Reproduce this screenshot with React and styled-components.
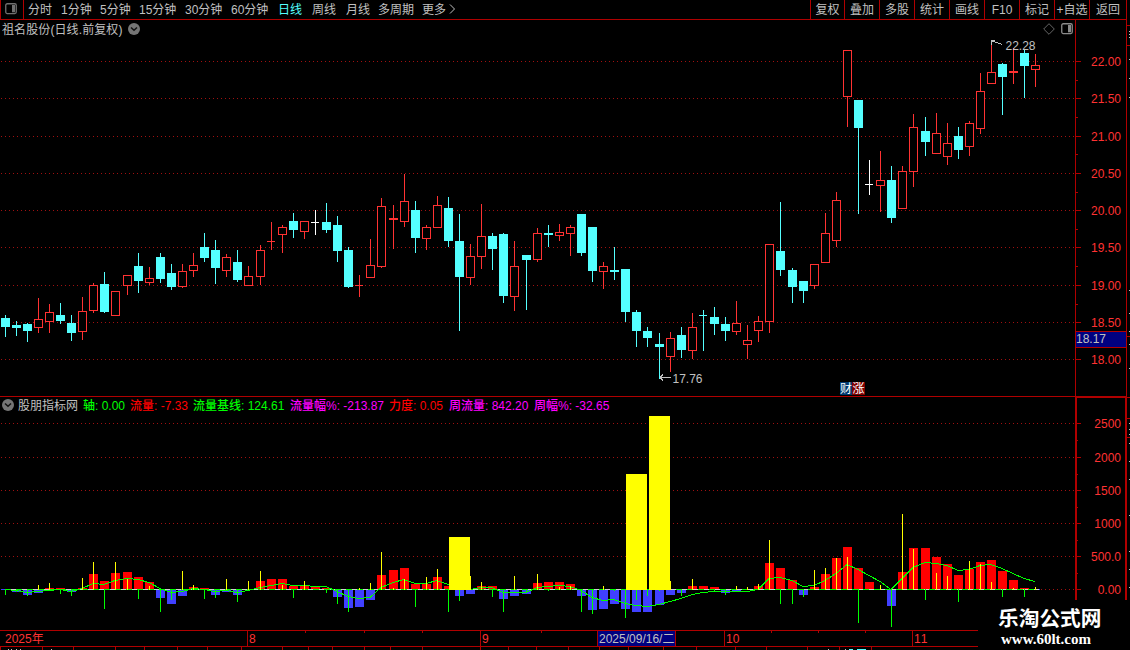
import React from "react";
import styled, { createGlobalStyle } from "styled-components";

const LINE = "#b00000";
const UP = "#ff3232";
const DOWN = "#54ffff";
const GREY = "#c0c0c0";

const GlobalStyle = createGlobalStyle`
  body {
    margin: 0;
    background: #000;
    overflow: hidden;
    font-family: "Liberation Sans", "Noto Sans CJK SC", sans-serif;
    font-size: 12px;
    font-kerning: none;
  }
  svg {
    display: block;
    flex-shrink: 0;
  }
`;

const Screen = styled.div`
  position: relative;
  display: flex;
  flex-direction: column;
  width: 1130px;
  height: 650px;
  background: #000;
  color: ${GREY};
  overflow: hidden;
`;

const Toolbar = styled.div`
  display: flex;
  box-sizing: border-box;
  width: 1127px;
  height: 20px;
  border-bottom: 1px solid ${LINE};
  border-right: 1px solid ${LINE};
`;

const ToggleBox = styled.div`
  display: flex;
  box-sizing: border-box;
  width: 24px;
  padding: 3px 0 0 4px;
  border-left: 1px solid ${LINE};
  border-right: 1px solid ${LINE};
`;

const Periods = styled.div`
  display: flex;
  flex: 1;
  padding-left: 4px;
`;

const Period = styled.div`
  width: ${(props) => props.$width}px;
  line-height: 20px;
  white-space: nowrap;
  color: ${(props) => (props.$active ? DOWN : GREY)};
`;

const Tool = styled.div`
  box-sizing: border-box;
  width: ${(props) => props.$width || 35}px;
  height: 19px;
  border-left: 1px solid ${LINE};
  line-height: 20px;
  text-align: center;
  white-space: nowrap;
`;

const Panel = styled.div`
  display: flex;
  height: ${(props) => props.$height}px;
`;

const Main = styled.div`
  display: flex;
  flex-direction: column;
  width: 1075px;
`;

const TitleRow = styled.div`
  display: flex;
  align-items: center;
  justify-content: space-between;
  height: 18px;
  padding: 0 2px;
`;

const Title = styled.div`
  display: flex;
  align-items: center;
  gap: 4px;
  white-space: nowrap;
`;

const StockName = styled.span`
  width: 122px;
  padding-top: 2px;
  line-height: 18px;
  letter-spacing: 0.1px;
`;

const TitleIcons = styled.div`
  display: flex;
  gap: 6px;
`;

const Legend = styled.div`
  display: flex;
  box-sizing: border-box;
  height: 19px;
  padding: 0 0 0 2px;
  border-top: 1px solid ${LINE};
  line-height: 18px;
  white-space: nowrap;
`;

const LegendName = styled.span`
  width: 65px;
  margin-left: 4px;
`;

const LegendItem = styled.span`
  width: ${(props) => props.$width}px;
  color: ${(props) => props.$color};
  font-weight: 500;
`;

const LegendIcon = styled.span`
  padding-top: 2px;
`;

const DateRow = styled.div`
  position: relative;
  display: flex;
  box-sizing: border-box;
  width: 978px;
  height: 17px;
  border-top: 1px solid ${LINE};
  border-bottom: 1px solid ${LINE};
`;

const DateCell = styled.div`
  box-sizing: border-box;
  width: ${(props) => props.$width}px;
  padding-left: ${(props) => props.$pad || 1}px;
  border-left: ${(props) => (props.$open ? "none" : `1px solid ${LINE}`)};
  background: ${(props) => (props.$active ? "#000080" : "none")};
  color: ${(props) => (props.$active ? GREY : UP)};
  line-height: 16px;
  white-space: nowrap;
`;

const Tick = styled.i`
  position: absolute;
  top: 0;
  left: ${(props) => props.$left}px;
  width: 1px;
  height: 2px;
  background: ${LINE};
`;

const Brand = styled.div`
  position: absolute;
  right: 0;
  bottom: 0;
  display: flex;
  flex-direction: column;
  box-sizing: border-box;
  width: 152px;
  height: 50px;
  padding-left: 20px;
  background: #000;
  color: #fff;
  white-space: nowrap;
`;

const BrandName = styled.div`
  margin-top: 3px;
  font: 700 20.7px/29px "Noto Sans CJK SC", sans-serif;
`;

const BrandSite = styled.div`
  padding-left: 3px;
  font: 700 15px/14px "Liberation Serif", serif;
`;

const periods = [
  ["分时", 33],
  ["1分钟", 39],
  ["5分钟", 39],
  ["15分钟", 46],
  ["30分钟", 46],
  ["60分钟", 47],
  ["日线", 34, true],
  ["周线", 34],
  ["月线", 32],
  ["多周期", 44],
  ["更多", 26],
];

const tools = [
  ["复权", 34],
  ["叠加"],
  ["多股"],
  ["统计"],
  ["画线"],
  ["F10"],
  ["标记"],
  ["+自选"],
  ["返回", 37],
];

const legend = [
  ["轴: 0.00", 47, "#00ff00"],
  ["流量: -7.33", 63, "#ff0000"],
  ["流量基线: 124.61", 97, "#00ff00"],
  ["流量幅%: -213.87", 99, "#ff00ff"],
  ["力度: 0.05", 60, "#ff0000"],
  ["周流量: 842.20", 85, "#ff00ff"],
  ["周幅%: -32.65", 80, "#ff00ff"],
];

// x, high, body top, body bottom, low, kind (u up, d down, w flat)
const candles = [
  [5, 315, 318, 327, 337, "d"],
  [16, 321, 325, 328, 336, "d"],
  [27, 323, 324, 331, 342, "d"],
  [38, 298, 319, 328, 333, "u"],
  [49, 304, 312, 322, 333, "u"],
  [60, 303, 315, 321, 324, "d"],
  [71, 315, 323, 333, 341, "d"],
  [82, 297, 311, 332, 340, "u"],
  [93, 283, 285, 311, 313, "u"],
  [104, 272, 284, 312, 313, "d"],
  [115, 291, 291, 316, 316, "u"],
  [127, 275, 275, 286, 295, "u"],
  [138, 253, 266, 281, 293, "d"],
  [149, 267, 278, 283, 285, "u"],
  [160, 253, 257, 279, 283, "d"],
  [171, 264, 273, 287, 290, "d"],
  [182, 264, 271, 287, 288, "u"],
  [193, 253, 265, 271, 277, "u"],
  [204, 233, 247, 258, 262, "d"],
  [215, 240, 250, 268, 284, "d"],
  [226, 254, 257, 271, 277, "u"],
  [237, 250, 262, 280, 282, "d"],
  [248, 266, 276, 286, 286, "u"],
  [260, 245, 250, 277, 285, "u"],
  [271, 222, 241, 242, 250, "u"],
  [282, 225, 227, 235, 253, "u"],
  [293, 213, 221, 230, 238, "d"],
  [304, 221, 221, 232, 239, "u"],
  [315, 210, 222, 223, 235, "w"],
  [326, 203, 222, 230, 233, "d"],
  [337, 216, 225, 251, 262, "d"],
  [348, 247, 250, 287, 288, "d"],
  [359, 275, 285, 286, 297, "u"],
  [370, 239, 265, 278, 278, "u"],
  [381, 198, 206, 267, 268, "u"],
  [393, 205, 218, 220, 249, "u"],
  [404, 174, 201, 222, 227, "u"],
  [415, 201, 210, 238, 253, "d"],
  [426, 225, 227, 239, 250, "u"],
  [437, 196, 205, 228, 228, "u"],
  [448, 197, 208, 241, 247, "d"],
  [459, 214, 241, 277, 331, "d"],
  [470, 244, 256, 278, 285, "u"],
  [481, 204, 236, 257, 269, "u"],
  [492, 233, 236, 249, 270, "d"],
  [503, 233, 234, 296, 303, "d"],
  [514, 241, 266, 297, 311, "u"],
  [526, 255, 255, 260, 310, "d"],
  [537, 228, 233, 260, 262, "u"],
  [548, 225, 233, 235, 247, "d"],
  [559, 224, 232, 236, 241, "u"],
  [570, 225, 227, 234, 256, "u"],
  [581, 214, 214, 253, 256, "d"],
  [592, 227, 227, 271, 282, "d"],
  [603, 262, 266, 272, 289, "u"],
  [614, 247, 270, 272, 280, "d"],
  [625, 269, 269, 312, 322, "d"],
  [636, 310, 312, 331, 347, "d"],
  [647, 327, 331, 338, 347, "d"],
  [659, 333, 344, 347, 379, "d"],
  [670, 332, 338, 357, 372, "u"],
  [681, 327, 335, 350, 358, "d"],
  [692, 313, 327, 351, 359, "u"],
  [703, 310, 315, 316, 351, "d"],
  [714, 307, 317, 324, 335, "d"],
  [725, 317, 324, 331, 341, "d"],
  [736, 301, 323, 332, 335, "u"],
  [747, 325, 340, 345, 359, "u"],
  [758, 316, 321, 331, 342, "u"],
  [769, 244, 244, 322, 333, "u"],
  [780, 202, 251, 270, 276, "d"],
  [792, 268, 270, 287, 303, "d"],
  [803, 281, 281, 291, 303, "d"],
  [814, 264, 264, 286, 289, "u"],
  [825, 213, 233, 263, 263, "u"],
  [836, 192, 200, 241, 247, "u"],
  [847, 50, 50, 97, 127, "u"],
  [858, 100, 100, 128, 214, "d"],
  [869, 160, 184, 185, 195, "w"],
  [880, 151, 180, 186, 212, "u"],
  [891, 166, 180, 218, 223, "d"],
  [902, 166, 171, 209, 209, "u"],
  [913, 114, 127, 172, 187, "u"],
  [925, 117, 131, 142, 156, "d"],
  [936, 113, 133, 154, 154, "u"],
  [947, 123, 143, 157, 165, "u"],
  [958, 127, 136, 150, 159, "d"],
  [969, 121, 123, 147, 156, "u"],
  [980, 73, 91, 129, 134, "u"],
  [991, 40, 72, 84, 84, "u"],
  [1002, 63, 64, 77, 115, "d"],
  [1013, 48, 71, 73, 84, "u"],
  [1024, 49, 53, 66, 98, "d"],
  [1035, 54, 65, 70, 87, "u"],
];

// bar end, spike end (0 for none), base line; one row for each candle
const flow = [
  [590, 595, 589], [592, 592, 590], [595, 596, 592], [593, 585, 591],
  [588, 583, 590], [588, 594, 589], [592, 596, 591], [588, 578, 588],
  [574, 562, 583], [581, 609, 584], [573, 562, 580], [572, 579, 578],
  [577, 599, 579], [582, 586, 582], [598, 612, 588], [604, 600, 592],
  [596, 571, 591], [587, 585, 588], [588, 599, 589], [595, 598, 591],
  [592, 579, 590], [595, 602, 592], [590, 581, 590], [581, 571, 587],
  [579, 0, 585], [579, 585, 583], [586, 598, 585], [586, 581, 585],
  [587, 0, 586], [588, 593, 586], [597, 604, 591], [608, 612, 596],
  [607, 588, 598], [600, 583, 597], [575, 552, 587], [570, 588, 582],
  [568, 579, 579], [584, 607, 583], [584, 577, 583], [577, 569, 580],
  [586, 612, 584], [596, 601, 587], [594, 576, 589], [586, 582, 587],
  [586, 597, 587], [599, 612, 592], [596, 576, 592], [594, 592, 592],
  [583, 574, 587], [582, 591, 586], [582, 587, 585], [584, 586, 586],
  [596, 612, 590], [610, 614, 597], [609, 586, 600], [604, 591, 599],
  [609, 618, 603], [612, 600, 605], [612, 596, 606], [605, 591, 604],
  [595, 581, 601], [593, 596, 598], [586, 579, 594], [586, 0, 592],
  [587, 591, 591], [593, 595, 591], [591, 586, 591], [590, 587, 591],
  [586, 584, 589], [563, 540, 578], [568, 604, 577], [580, 604, 580],
  [595, 597, 586], [587, 570, 585], [574, 568, 580], [558, 558, 573],
  [547, 557, 564], [568, 623, 569], [582, 0, 575], [590, 585, 581],
  [606, 627, 589], [572, 514, 578], [548, 549, 567], [548, 600, 562],
  [557, 573, 563], [564, 576, 565], [575, 602, 570], [569, 561, 569],
  [562, 564, 565], [560, 582, 564], [571, 597, 568], [580, 588, 573],
  [588, 597, 578], [590, 587, 581],
];

const bigBars = [
  [449, 537],
  [626, 474],
  [649, 416],
];

const priceTicks = [
  [61, "22.00"],
  [98, "21.50"],
  [136, "21.00"],
  [173, "20.50"],
  [210, "20.00"],
  [247, "19.50"],
  [285, "19.00"],
  [322, "18.50"],
  [359, "18.00"],
];

const flowTicks = [
  [423, "2500"],
  [457, "2000"],
  [490, "1500"],
  [523, "1000"],
  [556, "500.0"],
  [589, "0.00"],
];

const dateCells = [
  ["2025年", 247, 5],
  ["8", 233],
  ["9", 117],
  ["2025/09/16/二", 78, 1, true],
  ["", 49],
  ["10", 188],
  ["11", 66],
];

const dateTicks = [305, 364, 422, 541, 771, 818, 865];

const footTicks = [
  0, 42, 73, 115, 144, 177, 207, 241, 282, 308, 332, 364, 390, 422, 480, 508,
  536, 568, 599, 628, 663, 696, 735, 766, 807, 839, 871,
];

const edgeMarks = [31, 34, 37, 59, 78, 97, 290, 313, 331, 344, 368, 423, 429, 434, 443, 461, 479, 515, 551, 569, 587];

function PanelIcon({ color = "#8a8a8a" }) {
  return (
    <svg width="12" height="12" viewBox="0 0 12 12">
      <rect x="0.75" y="0.75" width="10.5" height="9.8" rx="1.5" fill="none" stroke={color} strokeWidth="1.3" />
      <rect x="7" y="2" width="3" height="7.3" fill={color} />
    </svg>
  );
}

function ChevronIcon() {
  return (
    <svg width="12" height="12" viewBox="0 0 12 12">
      <circle cx="6" cy="6" r="6" fill="#757575" />
      <path d="M3 4.5L6 7.3L9 4.5" fill="none" stroke="#111" strokeWidth="1.5" />
    </svg>
  );
}

function DiamondIcon() {
  return (
    <svg width="12" height="12" viewBox="0 0 12 12">
      <path d="M6 0.7L11.3 6L6 11.3L0.7 6Z" fill="none" stroke="#808080" strokeWidth="0.8" />
    </svg>
  );
}

function Grid({ ticks }) {
  return ticks.map(([y]) => (
    <line key={y} x1="1" x2="1075" y1={y + 0.5} y2={y + 0.5} stroke="#a01010" strokeDasharray="1 3" />
  ));
}

function Candle({ data }) {
  const [x, high, top, bottom, low, kind] = data;
  const color = { u: UP, d: DOWN, w: "#ffffff" }[kind];
  const height = bottom - top;
  const hollow = kind === "u" && height > 2;
  return (
    <g fill={color}>
      <rect x={x} y={high} width="1" height={low - high} />
      <rect x={x - 4} y={top} width={height === 1 ? 8 : 9} height={height} />
      {hollow && <rect x={x - 3} y={top + 1} width="7" height={height - 2} fill="#000" />}
    </g>
  );
}

function PriceChart() {
  return (
    <svg width="1075" height="358" viewBox="0 38 1075 358" shapeRendering="crispEdges">
      <Grid ticks={priceTicks} />
      {candles.map((c) => (
        <Candle key={c[0]} data={c} />
      ))}
      <path d="M991 40.5H995M991.5 41V45M992 41.5H994L1002 44.5" fill="none" stroke={GREY} />
      <text x="1005.5" y="50" fill={GREY}>22.28</text>
      <path d="M660 377.5H671M660 377.5L663 374.5M660 377.5L663 380.5" fill="none" stroke={GREY} />
      <text x="672.5" y="383" fill={GREY}>17.76</text>
      <rect x="840" y="382" width="12" height="13" fill="#003870" />
      <rect x="852" y="382" width="13" height="13" fill="#800000" />
      <text x="840" y="393" fill="#fff">财</text>
      <text x="852.5" y="393" fill="#fff">涨</text>
    </svg>
  );
}

function FlowChart() {
  const base = flow.map((f, i) => `${candles[i][0]},${f[2] + 0.5}`).join(" ");
  return (
    <svg width="1075" height="215" viewBox="0 415 1075 215" shapeRendering="crispEdges">
      <Grid ticks={flowTicks} />
      {flow.map(([end], i) => (
        <rect
          key={i}
          x={candles[i][0] - 4}
          y={Math.min(end, 589)}
          width="9"
          height={Math.abs(end - 589)}
          fill={end < 589 ? "#ff0000" : "#4040ff"}
        />
      ))}
      <line x1="5" x2="1039" y1="589.5" y2="589.5" stroke="#d0d0d0" />
      <line x1="5" x2="1039" y1="589.5" y2="589.5" stroke="#00ff00" strokeDasharray="6 5" />
      <polyline points={base} fill="none" stroke="#00ff00" />
      {flow.map(([, spike], i) =>
        spike ? (
          <rect
            key={i}
            x={candles[i][0]}
            y={Math.min(spike, 589)}
            width="1"
            height={Math.abs(spike - 589) + (spike < 589 ? 1 : 0)}
            fill={spike < 589 ? "#ffff00" : "#00ff00"}
          />
        ) : null
      )}
      {bigBars.map(([x, y]) => (
        <rect key={x} x={x} y={y} width="21" height={590 - y} fill="#ffff00" />
      ))}
    </svg>
  );
}

function Axis({ ticks, top, height, thick, minors, children }) {
  return (
    <svg width="55" height={height} viewBox={`1075 ${top} 55 ${height}`} shapeRendering="crispEdges">
      <rect x="1075" y={top} width={thick ? 2 : 1} height={height} fill={LINE} />
      <rect x={thick ? 1125 : 1126} y={top} width={thick ? 2 : 1} height={height} fill={LINE} />
      {thick && <rect x="1075" y={top} width="52" height="2" fill={LINE} />}
      {ticks.map(([y, label]) => (
        <g key={y}>
          <rect x="1075" y={y} width="6" height="1" fill={LINE} />
          <text x="1121" y={y + 5} fill={UP} textAnchor="end">{label}</text>
        </g>
      ))}
      {minors.map((y) => (
        <rect key={y} x="1075" y={y} width="3" height="1" fill={LINE} />
      ))}
      {edgeMarks.map((y) => (
        <rect key={y} x="1129" y={y} width="1" height="1" fill={GREY} />
      ))}
      {[25, 45, 336, 397, 418, 437].map((y) => (
        <rect key={y} x="1127" y={y} width="3" height="1" fill={LINE} />
      ))}
      {children}
    </svg>
  );
}

function FootStrip() {
  return (
    <svg width="978" height="3" viewBox="0 647 978 3" shapeRendering="crispEdges">
      {footTicks.map((x) => (
        <rect key={x} x={x} y="647" width="1" height="3" fill={LINE} />
      ))}
      {[8, 11, 16, 20, 51, 828, 845].map((x) => (
        <rect key={x} x={x} y="649" width="1" height="1" fill={GREY} />
      ))}
      <rect x="849" y="649" width="4" height="1" fill={DOWN} />
      <rect x="857" y="649" width="9" height="1" fill={DOWN} />
    </svg>
  );
}

function App() {
  return (
    <Screen>
      <GlobalStyle />
      <Toolbar>
        <ToggleBox>
          <PanelIcon color="#707070" />
        </ToggleBox>
        <Periods>
          {periods.map(([name, width, active]) => (
            <Period key={name} $width={width} $active={active}>
              {name}
            </Period>
          ))}
          <svg width="8" height="18" viewBox="0 0 8 18">
            <path d="M2 4.5L6.5 9L2 13.5" fill="none" stroke={GREY} />
          </svg>
        </Periods>
        {tools.map(([name, width]) => (
          <Tool key={name} $width={width}>
            {name}
          </Tool>
        ))}
      </Toolbar>
      <Panel $height={376}>
        <Main>
          <TitleRow>
            <Title>
              <StockName>祖名股份(日线.前复权)</StockName>
              <ChevronIcon />
            </Title>
            <TitleIcons>
              <DiamondIcon />
              <PanelIcon />
            </TitleIcons>
          </TitleRow>
          <PriceChart />
        </Main>
        <Axis ticks={priceTicks} top={20} height={376} minors={[80, 117, 154, 192, 229, 266, 304]}>
          <rect x="1076" y="331" width="50" height="17" fill="#000080" />
          <rect x="1076" y="331" width="50" height="1" fill={LINE} />
          <rect x="1076" y="347" width="50" height="1" fill={LINE} />
          <text x="1076" y="343" fill={GREY}>18.17</text>
        </Axis>
      </Panel>
      <Panel $height={234}>
        <Main>
          <Legend>
            <LegendIcon>
              <ChevronIcon />
            </LegendIcon>
            <LegendName>股朋指标网</LegendName>
            {legend.map(([text, width, color]) => (
              <LegendItem key={text} $width={width} $color={color}>
                {text}
              </LegendItem>
            ))}
          </Legend>
          <FlowChart />
        </Main>
        <Axis ticks={flowTicks} top={396} height={234} minors={[440, 474, 507, 540, 573]} thick />
      </Panel>
      <DateRow>
        {dateCells.map(([text, width, pad, active], i) => (
          <DateCell key={i} $width={width} $pad={pad} $active={active} $open={i === 0}>
            {text}
          </DateCell>
        ))}
        {dateTicks.map((x) => (
          <Tick key={x} $left={x} />
        ))}
      </DateRow>
      <FootStrip />
      <Brand>
        <BrandName>乐淘公式网</BrandName>
        <BrandSite>www.60lt.com</BrandSite>
      </Brand>
    </Screen>
  );
}

export default App;
